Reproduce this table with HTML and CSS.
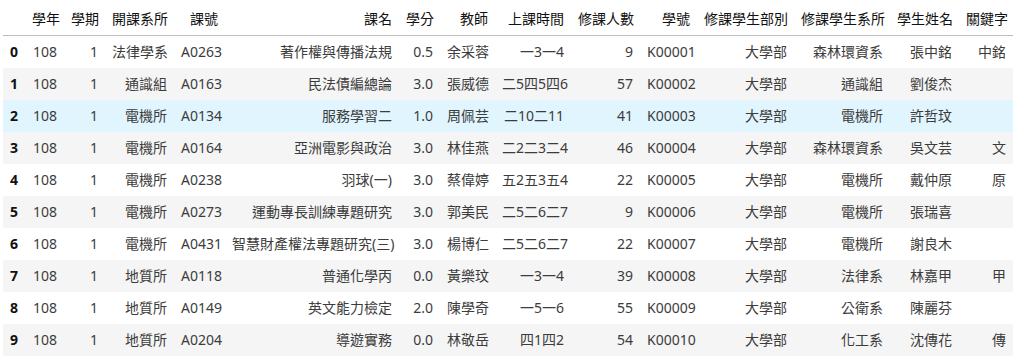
FILE: index.html
```html
<!DOCTYPE html>
<html lang="zh-Hant">
<head>
<meta charset="utf-8">
<link rel="stylesheet" href="styles.css">
</head>
<body>
<div class="output">
<table class="dataframe">
<colgroup>
<col class="c-idx"><col class="c-year"><col class="c-term"><col class="c-dept"><col class="c-code"><col class="c-name"><col class="c-credit"><col class="c-teacher"><col class="c-time"><col class="c-count"><col class="c-sid"><col class="c-div"><col class="c-sdept"><col class="c-sname"><col class="c-kw">
</colgroup>
<thead>
<tr><th></th><th>學年</th><th>學期</th><th>開課系所</th><th>課號</th><th>課名</th><th>學分</th><th>教師</th><th>上課時間</th><th>修課人數</th><th>學號</th><th>修課學生部別</th><th>修課學生系所</th><th>學生姓名</th><th>關鍵字</th></tr>
</thead>
<tbody>
<tr><th>0</th><td>108</td><td>1</td><td>法律學系</td><td>A0263</td><td>著作權與傳播法規</td><td>0.5</td><td>余采蓉</td><td>一3一4</td><td>9</td><td>K00001</td><td>大學部</td><td>森林環資系</td><td>張中銘</td><td>中銘</td></tr>
<tr><th>1</th><td>108</td><td>1</td><td>通識組</td><td>A0163</td><td>民法債編總論</td><td>3.0</td><td>張威德</td><td>二5四5四6</td><td>57</td><td>K00002</td><td>大學部</td><td>通識組</td><td>劉俊杰</td><td></td></tr>
<tr class="hover"><th>2</th><td>108</td><td>1</td><td>電機所</td><td>A0134</td><td>服務學習二</td><td>1.0</td><td>周佩芸</td><td>二10二11</td><td>41</td><td>K00003</td><td>大學部</td><td>電機所</td><td>許哲玟</td><td></td></tr>
<tr><th>3</th><td>108</td><td>1</td><td>電機所</td><td>A0164</td><td>亞洲電影與政治</td><td>3.0</td><td>林佳燕</td><td>二2二3二4</td><td>46</td><td>K00004</td><td>大學部</td><td>森林環資系</td><td>吳文芸</td><td>文</td></tr>
<tr><th>4</th><td>108</td><td>1</td><td>電機所</td><td>A0238</td><td>羽球(一)</td><td>3.0</td><td>蔡偉婷</td><td>五2五3五4</td><td>22</td><td>K00005</td><td>大學部</td><td>電機所</td><td>戴仲原</td><td>原</td></tr>
<tr><th>5</th><td>108</td><td>1</td><td>電機所</td><td>A0273</td><td>運動專長訓練專題研究</td><td>3.0</td><td>郭美民</td><td>二5二6二7</td><td>9</td><td>K00006</td><td>大學部</td><td>電機所</td><td>張瑞喜</td><td></td></tr>
<tr><th>6</th><td>108</td><td>1</td><td>電機所</td><td>A0431</td><td>智慧財產權法專題研究(三)</td><td>3.0</td><td>楊博仁</td><td>二5二6二7</td><td>22</td><td>K00007</td><td>大學部</td><td>電機所</td><td>謝良木</td><td></td></tr>
<tr><th>7</th><td>108</td><td>1</td><td>地質所</td><td>A0118</td><td>普通化學丙</td><td>0.0</td><td>黃樂玟</td><td>一3一4</td><td>39</td><td>K00008</td><td>大學部</td><td>法律系</td><td>林嘉甲</td><td>甲</td></tr>
<tr><th>8</th><td>108</td><td>1</td><td>地質所</td><td>A0149</td><td>英文能力檢定</td><td>2.0</td><td>陳學奇</td><td>一5一6</td><td>55</td><td>K00009</td><td>大學部</td><td>公衛系</td><td>陳麗芬</td><td></td></tr>
<tr><th>9</th><td>108</td><td>1</td><td>地質所</td><td>A0204</td><td>導遊實務</td><td>0.0</td><td>林敬岳</td><td>四1四2</td><td>54</td><td>K00010</td><td>大學部</td><td>化工系</td><td>沈傳花</td><td>傳</td></tr>
</tbody>
</table>
</div>
</body>
</html>
```
FILE: styles.css
```css
html, body {
  margin: 0;
  padding: 0;
  background: #ffffff;
}
.output {
  padding: 3px 0 0 3px;
}
.dataframe {
  border-collapse: collapse;
  border-spacing: 0;
  table-layout: fixed;
  width: 1010px;
  font-family: "Noto Sans", "Noto Sans CJK TC", sans-serif;
  font-size: 14px;
  color: #3c3c3c;
}
.dataframe th,
.dataframe td {
  padding: 7px;
  height: 18px;
  line-height: 18px;
  text-align: right;
  vertical-align: middle;
  white-space: nowrap;
  border: none;
}
.dataframe thead th {
  font-weight: normal;
  color: #111;
  border-bottom: 1px solid #bdbdbd;
}
.dataframe tbody th {
  font-weight: bold;
  color: #111;
  text-align: left;
}
.dataframe tbody tr:nth-child(even) {
  background: #f5f5f5;
}
.dataframe tbody tr.hover {
  background: #e1f5fe;
}
.c-idx { width: 22px; }
.c-year { width: 39px; }
.c-term { width: 41px; }
.c-dept { width: 69px; }
.c-code { width: 51px; }
.c-name { width: 174px; }
.c-credit { width: 41px; }
.c-teacher { width: 55px; }
.c-time { width: 76px; }
.c-count { width: 69px; }
.c-sid { width: 57px; }
.c-div { width: 97px; }
.c-sdept { width: 96px; }
.c-sname { width: 69px; }
.c-kw { width: 54px; }
```
